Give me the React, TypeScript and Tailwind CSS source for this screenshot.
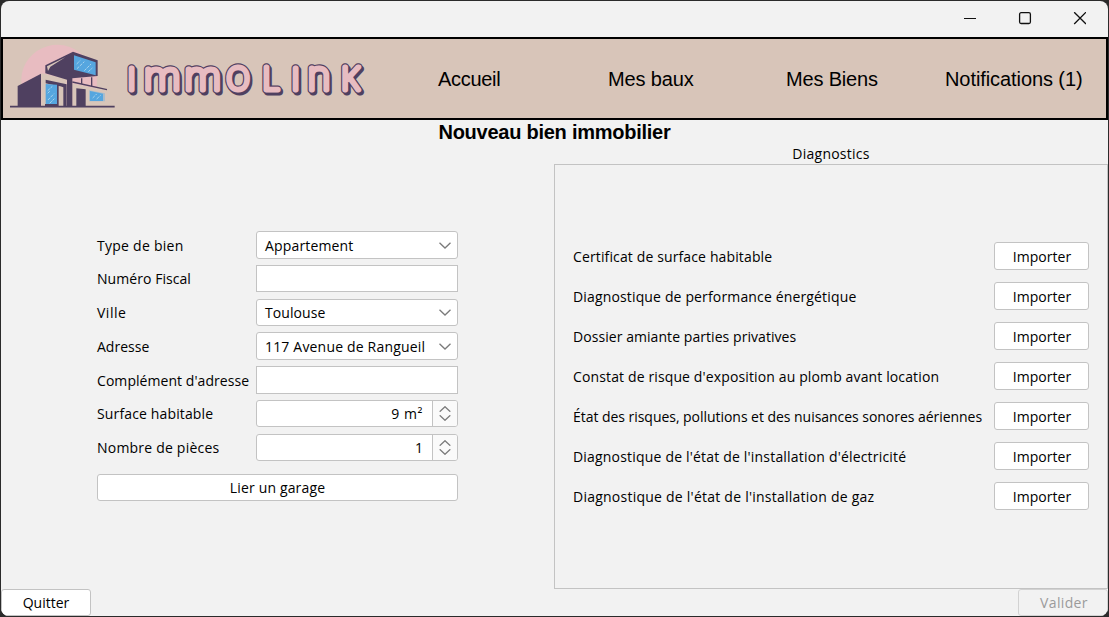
import type { ReactNode } from "react";

type Item = { text: string; track: string };

const navItems: (Item & { pos: string })[] = [
  { text: "Accueil", track: "tracking-[-0.3px]", pos: "left-[438px]" },
  { text: "Mes baux", track: "tracking-[-0.15px]", pos: "left-[608px]" },
  { text: "Mes Biens", track: "tracking-[-0.17px]", pos: "left-[786px]" },
  { text: "Notifications (1)", track: "tracking-[-0.08px]", pos: "left-[945px]" },
];

const diagnostics: Item[] = [
  { text: "Certificat de surface habitable", track: "tracking-[0.13px]" },
  { text: "Diagnostique de performance énergétique", track: "tracking-[0.15px]" },
  { text: "Dossier amiante parties privatives", track: "tracking-[0.06px]" },
  { text: "Constat de risque d'exposition au plomb avant location", track: "tracking-[0.13px]" },
  { text: "État des risques, pollutions et des nuisances sonores aériennes", track: "tracking-[-0.04px]" },
  { text: "Diagnostique de l'état de l'installation d'électricité", track: "tracking-[0.19px]" },
  { text: "Diagnostique de l'état de l'installation de gaz", track: "tracking-[0.24px]" },
];

function House() {
  return (
    <g transform="translate(0 36) scale(0.33333)">
      <path d="M64 210 V130 A108 106 0 0 1 262 74 L290 110 V155 L230 210 Z" fill="#e8bcc1" />
      <path d="M53 150 L123 113 V212 H53 Z" fill="#4f4060" />
      <path d="M124 112 L200 128 V212 H124 Z" fill="#d8c5b9" />
      <path d="M137 131 L200 145 V212 H190 V154 L137 142 Z" fill="#4f4060" />
      <path d="M175 150 L188 153 V212 H175 Z" fill="#d8c5b9" />
      <path d="M137 144 L171 146 V206 H137 Z" fill="#56a6df" />
      <path d="M171 146 L176 147 V209 H171 Z M135 204 H176 V213 H135 Z" fill="#4f4060" />
      <path d="M217 142 L270 153 L322 161 V209 H217 Z" fill="#d8c5b9" />
      <path d="M217 126 H290 V156 L217 142 Z" fill="#e8bcc1" />
      <path d="M219 47 L293 73 V120 L217 127 V212 H201 V131 L136 112 V88 Z" fill="#4f4060" />
      <path d="M141 91 L196 64 L151 92 L144 105 Z" fill="#d8c5b9" />
      <path d="M222 58 L287 79 V118 L222 101 Z" fill="#56a6df" />
      <path d="M217 138 L321 161 M245 127 V145 M275 124 V150" stroke="#4f4060" strokeWidth="4" fill="none" />
      <path d="M229 157 L257 160 V210 H229 Z" fill="#4f4060" />
      <path d="M267 163 L315 172 V196 H267 Z" fill="#a9bccb" />
      <path d="M270 165 L309 173 V195 H270 Z" fill="#56a6df" />
      <path d="M30 212 H344" stroke="#4f4060" strokeWidth="5" />
      <path
        d="M143 164 L157 151 M143 172 L150 165 M144 192 L162 173 M149 202 L163 188 M230 84 L241 73 M231 98 L253 77 M253 104 L273 84 M265 107 L277 96 M278 186 L290 174 M290 189 L302 178"
        stroke="#a9d3ec"
        strokeWidth="3"
        strokeDasharray="9 3"
        fill="none"
      />
    </g>
  );
}

const glyphs = (
  <>
    <tspan x="127.6" fontSize="31">I</tspan>
    <tspan x="144.4" fontSize="39.5">m</tspan>
    <tspan x="185" fontSize="39.5">m</tspan>
    <tspan x="226.4" fontSize="31" className="font-['Inter']">O</tspan>
    <tspan x="262.4" fontSize="31" className="font-['Inter']">L</tspan>
    <tspan x="291.5" fontSize="31">I</tspan>
    <tspan x="307.4" fontSize="39.5" className="font-['Inter']">n</tspan>
    <tspan x="341.2" fontSize="31" className="font-['Inter']">K</tspan>
  </>
);

function Logo() {
  return (
    <svg width="372" height="79" viewBox="3 39 372 79" className="font-['Roboto'] font-thin">
      <House />
      <g strokeLinejoin="round" strokeLinecap="round">
        <text aria-hidden="true" transform="translate(1.7 1.9)" y="90" fill="#4f4060" stroke="#4f4060" strokeWidth="7">{glyphs}</text>
        <text aria-hidden="true" y="90" fill="#4f4060" stroke="#4f4060" strokeWidth="7.4">{glyphs}</text>
        <text y="90" fill="#e8bcc1" stroke="#e8bcc1" strokeWidth="5.1">{glyphs}</text>
      </g>
    </svg>
  );
}

function Chevron() {
  return (
    <svg width="12" height="7" viewBox="0 0 12 7" className="shrink-0">
      <path d="M0.5 0.7 L6 6 L11.5 0.7" fill="none" stroke="#7b7b7b" strokeWidth="1.3" />
    </svg>
  );
}

function Combo({ text, track, h, pt }: Item & { h: string; pt: string }) {
  return (
    <div className={`${h} flex w-[202px] items-center justify-between rounded-[3px] border border-[#c3c3c3] bg-white pr-[6px] pl-2`}>
      <span className={`${track} ${pt}`}>{text}</span>
      <Chevron />
    </div>
  );
}

function Spin({ text, track }: Item) {
  return (
    <div className="flex h-[27px] w-[202px] overflow-hidden rounded-[3px] border border-[#c3c3c3] bg-white">
      <div className="flex flex-1 items-center justify-end border-r border-[#c3c3c3] pr-[9px]">
        <span className={track}>{text}</span>
      </div>
      <div className="flex w-6 flex-col items-center justify-center gap-[3px] bg-[#fafafa]">
        <svg width="12" height="6" viewBox="0 0 12 6">
          <path d="M0.7 5.7 L6 0.7 L11.3 5.7" fill="none" stroke="#7b7b7b" strokeWidth="1.3" />
        </svg>
        <svg width="12" height="6" viewBox="0 0 12 6">
          <path d="M0.7 0.3 L6 5.3 L11.3 0.3" fill="none" stroke="#7b7b7b" strokeWidth="1.3" />
        </svg>
      </div>
    </div>
  );
}

function Row({ label, track, h, mb, children }: { label: string; track: string; h: string; mb: string; children: ReactNode }) {
  return (
    <div className={`${h} ${mb} flex items-center`}>
      <label className={`${track} w-[159px] shrink-0 whitespace-nowrap`}>{label}</label>
      {children}
    </div>
  );
}

function Button({ text, track, size }: Item & { size: string }) {
  return (
    <button className={`${size} flex items-center justify-center rounded-[3px] border border-[#c3c3c3] bg-white`}>
      <span className={track}>{text}</span>
    </button>
  );
}

export default function App() {
  return (
    <div className="h-[617px] w-[1109px] bg-[#2b2b2b] p-px font-['Open_Sans','Noto_Sans',sans-serif] text-[14px] leading-5 text-black">
      <div className="flex h-[615px] w-[1107px] flex-col overflow-hidden rounded-[8px] bg-[#f2f2f2]">
        <div className="flex h-9 shrink-0 items-center justify-end pr-[22px]">
          <svg width="122" height="14" viewBox="0 0 122 14" fill="none" stroke="#111" strokeWidth="1.3">
            <path d="M0 6.5 H12" strokeWidth="1" />
            <rect x="55.6" y="0.7" width="10.8" height="10.8" rx="1.5" />
            <path d="M110.2 0.2 L122 12 M122 0.2 L110.2 12" />
          </svg>
        </div>

        <header className="relative h-[83px] shrink-0 border-2 border-black bg-[#d8c5b9] font-['Liberation_Sans',sans-serif] text-[20px]">
          <Logo />
          {navItems.map((n) => (
            <a key={n.text} className={`${n.pos} ${n.track} absolute top-[28px] -ml-[3px] leading-6 whitespace-nowrap`}>
              {n.text}
            </a>
          ))}
        </header>

        <h1 className="h-6 shrink-0 text-center font-['Liberation_Sans',sans-serif] text-[20px] leading-6 font-bold tracking-[-0.25px]">
          Nouveau bien immobilier
        </h1>

        <main className="flex h-[445px] shrink-0">
          <section className="w-[553px] pt-[87px] pl-24">
            <Row label="Type de bien" track="pt-[2px] tracking-[0.26px]" h="h-7" mb="mb-[6px]">
              <Combo text="Appartement" track="tracking-[0.16px]" h="h-7" pt="pt-[2px]" />
            </Row>
            <Row label="Numéro Fiscal" track="tracking-[0.06px]" h="h-[27px]" mb="mb-[7px]">
              <div className="h-[27px] w-[202px] border border-[#c3c3c3] bg-white" />
            </Row>
            <Row label="Ville" track="tracking-[0.5px]" h="h-[27px]" mb="mb-[6px]">
              <Combo text="Toulouse" track="tracking-[0.08px]" h="h-[27px]" pt="pt-0" />
            </Row>
            <Row label="Adresse" track="pt-[2px] tracking-[0.02px]" h="h-7" mb="mb-[6px]">
              <Combo text="117 Avenue de Rangueil" track="tracking-[0.18px]" h="h-7" pt="pt-[2px]" />
            </Row>
            <Row label="Complément d'adresse" track="pt-[2px] tracking-[0.06px]" h="h-7" mb="mb-[6px]">
              <div className="h-7 w-[202px] border border-[#c3c3c3] bg-white" />
            </Row>
            <Row label="Surface habitable" track="tracking-[0.14px]" h="h-[27px]" mb="mb-[7px]">
              <Spin text="9 m²" track="tracking-[0.6px]" />
            </Row>
            <Row label="Nombre de pièces" track="tracking-[0.21px]" h="h-[27px]" mb="mb-[13px]">
              <Spin text="1" track="tracking-[0px]" />
            </Row>
            <Button text="Lier un garage" track="tracking-[0.15px]" size="h-[27px] w-[361px]" />
          </section>

          <section className="w-[554px]">
            <h2 className="h-5 text-center leading-5 tracking-[0.24px]">Diagnostics</h2>
            <div className="flex h-[425px] flex-col gap-3 border border-[#c3c3c3] pt-[77px] pr-[18px] pl-[18px]">
              {diagnostics.map((d) => (
                <div key={d.text} className="flex h-7 items-center justify-between">
                  <span className={`${d.track} pt-[2px] whitespace-nowrap`}>{d.text}</span>
                  <Button text="Importer" track="pt-[2px] pl-[1px] tracking-[0.05px]" size="h-7 w-[95px]" />
                </div>
              ))}
            </div>
          </section>
        </main>

        <footer className="flex h-[27px] shrink-0 justify-between">
          <Button text="Quitter" track="" size="h-[27px] w-[90px]" />
          <button disabled className="flex h-[27px] w-[90px] items-center justify-center rounded-[3px] border border-[#d2d2d2] text-[#9b9b9b]">
            <span className="pl-[2px] tracking-[0.35px]">Valider</span>
          </button>
        </footer>
      </div>
    </div>
  );
}
